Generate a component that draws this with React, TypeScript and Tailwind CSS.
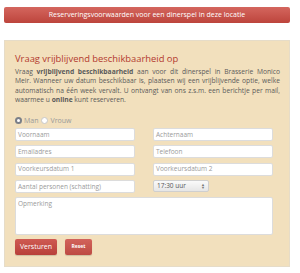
import React from 'react';

function Field({ placeholder }: { placeholder: string }) {
  return (
    <div className="flex h-[13px] w-[120px] items-center rounded-[2px] border border-[#dcdcdc] bg-white pl-[2px] text-[6.5px] text-[#9a9a9a]">
      {placeholder}
    </div>
  );
}

export default function App() {
  return (
    <div className="h-[273px] w-[300px] bg-white px-[4px] pt-[7px] font-['Open_Sans',sans-serif] text-[#555]">
      <div className="flex h-[16px] w-[286px] items-center justify-center rounded-[2px] bg-gradient-to-b from-[#d4665e] to-[#bd443c] text-[7px] text-white">
        Reserveringsvoorwaarden voor een dinerspel in deze locatie
      </div>

      <div className="mt-[17px] h-[227px] w-[286px] border border-[#e6dcc8] bg-[#f2e0bd] pl-[10px] pt-[12px]">
        <div className="text-[9.4px] leading-[12px] text-[#b23a2f]">Vraag vrijblijvend beschikbaarheid op</div>
        <p className="mt-[2px] w-[265px] text-justify text-[6.7px] leading-[9.3px] text-[#5a5a5a]">
          Vraag <b>vrijblijvend beschikbaarheid</b> aan voor dit dinerspel in Brasserie Monico Meir. Wanneer uw
          datum beschikbaar is, plaatsen wij een vrijblijvende optie, welke automatisch na één week vervalt. U
          ontvangt van ons z.s.m. een berichtje per mail, waarmee u <b>online</b> kunt reserveren.
        </p>

        <div className="mt-[12px] flex items-center gap-[2px] text-[7px] leading-[9px] text-[#999]">
          <span className="flex h-[7px] w-[7px] items-center justify-center rounded-full bg-[#7a7f88]">
            <span className="h-[3px] w-[3px] rounded-full bg-white" />
          </span>
          <span className="mr-[1px]">Man</span>
          <span className="h-[7px] w-[7px] rounded-full border border-[#c8c8c8] bg-white" />
          <span>Vrouw</span>
        </div>

        <div className="mt-[3px] grid w-[258px] grid-cols-[120px_120px] justify-between gap-y-[4.3px]">
          <Field placeholder="Voornaam" />
          <Field placeholder="Achternaam" />
          <Field placeholder="Emailadres" />
          <Field placeholder="Telefoon" />
          <Field placeholder="Voorkeursdatum 1" />
          <Field placeholder="Voorkeursdatum 2" />
          <Field placeholder="Aantal personen (schatting)" />
          <div className="flex h-[12px] w-[56px] items-center justify-between rounded-[2px] border border-[#cfcfcf] bg-gradient-to-b from-[#fafafa] to-[#e6e6e6] px-[3px] text-[6.5px] text-[#555]">
            <span>17:30 uur</span>
            <span className="flex flex-col text-[4px] leading-[3px] text-[#777]">
              <span>▲</span>
              <span>▼</span>
            </span>
          </div>
        </div>

        <div className="mt-[4px] h-[38px] w-[258px] rounded-[2px] border border-[#dcdcdc] bg-white pl-[2px] pt-[1px] text-[6.5px] text-[#9a9a9a]">
          Opmerking
        </div>

        <div className="mt-[4px] flex gap-[8px]">
          <div className="flex h-[16px] w-[42px] items-center justify-center rounded-[2px] bg-gradient-to-b from-[#cf5a52] to-[#b8403a] text-[7px] text-white shadow-[0_1px_1px_rgba(0,0,0,0.15)]">
            Versturen
          </div>
          <div className="flex h-[16px] w-[27px] items-center justify-center rounded-[2px] bg-gradient-to-b from-[#d2635b] to-[#bd4a43] text-[5px] font-bold text-white shadow-[0_1px_1px_rgba(0,0,0,0.15)]">
            Reset
          </div>
        </div>
      </div>
    </div>
  );
}
